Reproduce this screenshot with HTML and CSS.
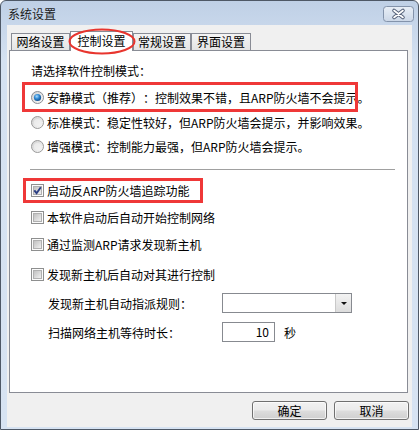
FILE: index.html
```html
<!DOCTYPE html>
<html lang="zh-CN">
<head>
<meta charset="utf-8">
<title>系统设置</title>
<link rel="stylesheet" href="styles.css">
</head>
<body>
<svg class="defs" width="0" height="0" aria-hidden="true">
  <defs>
    <linearGradient id="rbg" x1="0" y1="0" x2="1" y2="1">
      <stop offset="0" stop-color="#cfcfcf"/>
      <stop offset="1" stop-color="#fbfbfb"/>
    </linearGradient>
    <radialGradient id="dot" cx="0.4" cy="0.35" r="0.75">
      <stop offset="0" stop-color="#a8dcff"/>
      <stop offset="0.45" stop-color="#2f88d2"/>
      <stop offset="1" stop-color="#0b3c78"/>
    </radialGradient>
    <linearGradient id="cbg" x1="0" y1="0" x2="1" y2="1">
      <stop offset="0" stop-color="#bdbdbd"/>
      <stop offset="1" stop-color="#f3f3f3"/>
    </linearGradient>
    <linearGradient id="xbg" x1="0" y1="0" x2="0" y2="1">
      <stop offset="0" stop-color="#e9eff7"/>
      <stop offset="1" stop-color="#cbd7e7"/>
    </linearGradient>
  </defs>
</svg>
<div class="window">
  <div class="titlebar">
    <span class="title">系统设置</span>
    <svg class="close" width="31" height="16" viewBox="0 0 31 16">
      <rect x="0.5" y="0.5" width="30" height="15" rx="3" fill="url(#xbg)" stroke="#8393ab"/>
      <path d="M11 4.5 L20 11.5 M20 4.5 L11 11.5" stroke="#56627a" stroke-width="3.6" stroke-linecap="round"/>
      <path d="M11 4.5 L20 11.5 M20 4.5 L11 11.5" stroke="#ffffff" stroke-width="1.6" stroke-linecap="round"/>
    </svg>
  </div>
  <div class="client">
    <div class="tabs">
      <div class="tab t1">网络设置</div>
      <div class="tab active">控制设置<svg class="ellipse" width="68" height="27" viewBox="0 0 68 27"><ellipse cx="34" cy="13.5" rx="32.5" ry="12" fill="none" stroke="#e8352e" stroke-width="2"/></svg></div>
      <div class="tab t3">常规设置</div>
      <div class="tab t4">界面设置</div>
    </div>
    <div class="panel">
      <div class="row heading">请选择软件控制模式：</div>
      <div class="row r1">
        <svg class="radio" width="13" height="13" viewBox="0 0 13 13"><circle cx="6.5" cy="6.5" r="6" fill="url(#rbg)" stroke="#8a8d93"/><circle cx="6.5" cy="6.5" r="3.6" fill="url(#dot)"/></svg>
        <span>安静模式（推荐）：控制效果不错，且ARP防火墙不会提示。</span>
        <span class="redbox box1"></span>
      </div>
      <div class="row r2">
        <svg class="radio" width="13" height="13" viewBox="0 0 13 13"><circle cx="6.5" cy="6.5" r="6" fill="url(#rbg)" stroke="#9a9a9a"/><circle cx="6.5" cy="6.5" r="3.6" fill="#f4f4f4" opacity="0.6"/></svg>
        <span>标准模式：稳定性较好，但ARP防火墙会提示，并影响效果。</span>
      </div>
      <div class="row r3">
        <svg class="radio" width="13" height="13" viewBox="0 0 13 13"><circle cx="6.5" cy="6.5" r="6" fill="url(#rbg)" stroke="#9a9a9a"/><circle cx="6.5" cy="6.5" r="3.6" fill="#f4f4f4" opacity="0.6"/></svg>
        <span>增强模式：控制能力最强，但ARP防火墙会提示。</span>
      </div>
      <div class="sep"></div>
      <div class="row c1">
        <svg class="check" width="13" height="13" viewBox="0 0 13 13"><rect x="0.5" y="0.5" width="12" height="12" fill="#fbfbfb" stroke="#8e8f8f"/><rect x="2.5" y="2.5" width="8" height="8" fill="url(#cbg)" stroke="#b0b0b0"/><path d="M3.3 6.3 L5.6 9.2 L9.8 3.2" fill="none" stroke="#2b3f84" stroke-width="1.9"/></svg>
        <span>启动反ARP防火墙追踪功能</span>
        <span class="redbox box2"></span>
      </div>
      <div class="row c2">
        <svg class="check" width="13" height="13" viewBox="0 0 13 13"><rect x="0.5" y="0.5" width="12" height="12" fill="#fbfbfb" stroke="#8e8f8f"/><rect x="2.5" y="2.5" width="8" height="8" fill="url(#cbg)" stroke="#b0b0b0"/></svg>
        <span>本软件启动后自动开始控制网络</span>
      </div>
      <div class="row c3">
        <svg class="check" width="13" height="13" viewBox="0 0 13 13"><rect x="0.5" y="0.5" width="12" height="12" fill="#fbfbfb" stroke="#8e8f8f"/><rect x="2.5" y="2.5" width="8" height="8" fill="url(#cbg)" stroke="#b0b0b0"/></svg>
        <span>通过监测ARP请求发现新主机</span>
      </div>
      <div class="row c4">
        <svg class="check" width="13" height="13" viewBox="0 0 13 13"><rect x="0.5" y="0.5" width="12" height="12" fill="#fbfbfb" stroke="#8e8f8f"/><rect x="2.5" y="2.5" width="8" height="8" fill="url(#cbg)" stroke="#b0b0b0"/></svg>
        <span>发现新主机后自动对其进行控制</span>
      </div>
      <div class="row field f1">
        <span class="label">发现新主机自动指派规则：</span>
        <div class="select"><span class="select-btn"><span class="arrow"></span></span></div>
      </div>
      <div class="row field f2">
        <span class="label">扫描网络主机等待时长：</span>
        <div class="input">10</div>
        <span class="unit">秒</span>
      </div>
    </div>
    <div class="buttons">
      <button class="btn">确定</button>
      <button class="btn">取消</button>
    </div>
  </div>
</div>
</body>
</html>
```
FILE: styles.css
```css
html, body {
  margin: 0;
  padding: 0;
  background: #ffffff;
}
body {
  font-family: "Noto Sans CJK SC", "Noto Sans", sans-serif;
  font-size: 12px;
  color: #000;
  text-spacing-trim: space-all;
}
.defs {
  position: absolute;
  width: 0;
  height: 0;
}
.window {
  width: 419px;
  height: 430px;
  box-sizing: border-box;
  border: 1px solid #4e5866;
  border-radius: 6px 6px 0 0;
  background: linear-gradient(#bfd0e6, #d4e1f1 60px, #d7e3f2);
  display: flex;
  flex-direction: column;
  overflow: hidden;
}
.titlebar {
  height: 24px;
  flex: none;
  display: flex;
  align-items: flex-start;
  padding-left: 7px;
}
.title {
  margin-top: 4px;
  line-height: 17px;
  color: #1b1b1b;
}
.close {
  margin-left: auto;
  margin-right: 4px;
  margin-top: 5px;
}
.client {
  flex: 1;
  background: #f0f0f0;
  margin: 0 6px 2px 6px;
  padding-top: 6px;
  display: flex;
  flex-direction: column;
}
.tabs {
  display: flex;
  align-items: flex-end;
  height: 20px;
  padding-left: 4px;
  margin-bottom: -1px;
  position: relative;
  z-index: 1;
}
.tab {
  box-sizing: border-box;
  height: 17px;
  margin-bottom: 1px;
  border: 1px solid #898c95;
  border-bottom: none;
  background: linear-gradient(#f4f4f4, #e4e4e4);
  text-align: center;
  line-height: 16px;
  white-space: nowrap;
}
.t1 { width: 59px; }
.t3 { width: 58px; }
.t4 { width: 60px; }
.tab.active {
  width: 63px;
  height: 20px;
  margin-bottom: 0;
  background: #ffffff;
  line-height: 18px;
  position: relative;
}
.ellipse {
  position: absolute;
  left: -3px;
  top: -4px;
  overflow: visible;
}
.panel {
  height: 343px;
  box-sizing: border-box;
  border: 1px solid #898c95;
  background: #ffffff;
  margin-left: 2px;
  margin-right: 4px;
  padding: 9px 0 0 21px;
  display: flex;
  flex-direction: column;
  position: relative;
}
.row {
  height: 20px;
  display: flex;
  align-items: center;
  position: relative;
  white-space: nowrap;
}
.radio, .check {
  flex: none;
  margin-right: 3px;
}
.r1 { margin-top: 7px; }
.r2 { margin-top: 5px; }
.r3 { margin-top: 4px; }
.sep {
  height: 1px;
  background: #a0a0a0;
  margin-top: 13px;
  margin-left: -1px;
  width: 365px;
}
.c1 { margin-top: 10px; }
.c2 { margin-top: 7px; }
.c3 { margin-top: 7px; }
.c4 { margin-top: 10px; }
.f1 { margin-top: 9px; }
.f2 { margin-top: 9px; }
.field {
  padding-left: 17px;
}
.label {
  width: 174px;
  flex: none;
}
.redbox {
  position: absolute;
  box-sizing: border-box;
  border: 3px solid #ef3838;
}
.box1 {
  left: -9px;
  top: -5px;
  width: 336px;
  height: 30px;
}
.box2 {
  left: -8px;
  top: -2px;
  width: 180px;
  height: 25px;
}
.select {
  width: 130px;
  height: 20px;
  box-sizing: border-box;
  border: 1px solid #878a90;
  background: #fff;
  display: flex;
  justify-content: flex-end;
}
.select-btn {
  width: 16px;
  box-sizing: border-box;
  border-left: 1px solid #c9c9c9;
  background: linear-gradient(#f3f3f3, #dcdcdc);
  display: flex;
  align-items: center;
  justify-content: center;
}
.arrow {
  width: 0;
  height: 0;
  border-left: 3px solid transparent;
  border-right: 3px solid transparent;
  border-top: 3px solid #111;
}
.input {
  width: 53px;
  height: 20px;
  box-sizing: border-box;
  border: 1px solid #878a90;
  background: #fff;
  text-align: right;
  padding-right: 5px;
  line-height: 18px;
}
.unit {
  margin-left: 9px;
}
.buttons {
  display: flex;
  justify-content: flex-end;
  gap: 7px;
  margin-top: 8px;
  padding-right: 3px;
}
.btn {
  width: 75px;
  height: 19px;
  box-sizing: border-box;
  border: 1px solid #707070;
  border-radius: 3px;
  background: linear-gradient(#f2f2f2 0%, #ebebeb 48%, #dddddd 52%, #cfcfcf 100%);
  font-family: "Noto Sans CJK SC", "Noto Sans", sans-serif;
  font-size: 12px;
  color: #000;
  padding: 0;
  line-height: 16px;
  box-shadow: inset 0 0 0 1px rgba(255,255,255,0.7);
}
```
